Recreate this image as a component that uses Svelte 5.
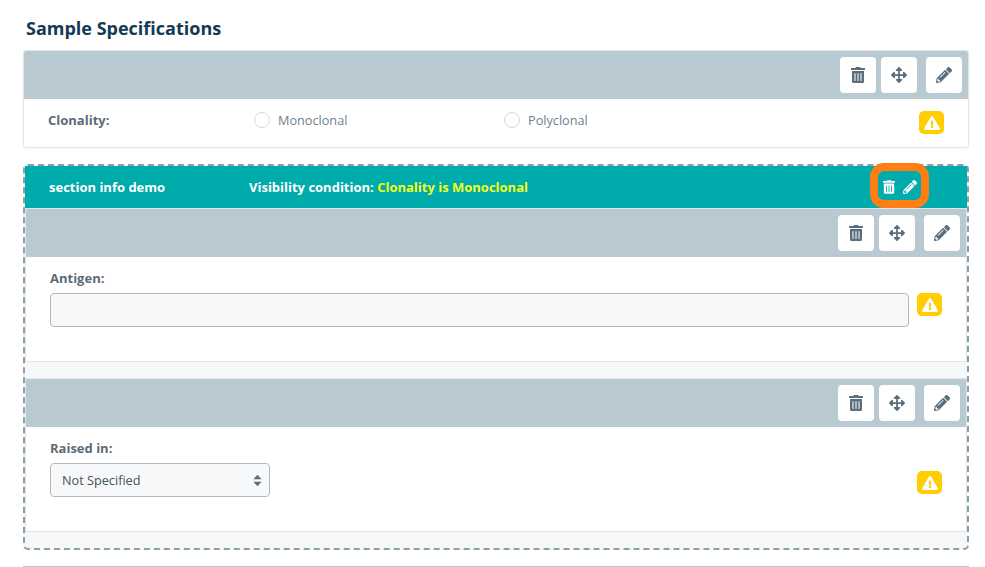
<script>
	const trash = 'M32 464a48 48 0 0 0 48 48h288a48 48 0 0 0 48-48V128H32zm272-256a16 16 0 0 1 32 0v224a16 16 0 0 1-32 0zm-96 0a16 16 0 0 1 32 0v224a16 16 0 0 1-32 0zm-96 0a16 16 0 0 1 32 0v224a16 16 0 0 1-32 0zM432 32H312l-9.4-18.7A24 24 0 0 0 281.1 0H166.8a23.72 23.72 0 0 0-21.4 13.3L136 32H16A16 16 0 0 0 0 48v32a16 16 0 0 0 16 16h416a16 16 0 0 0 16-16V48a16 16 0 0 0-16-16z';
	const arrows = 'M352.201 425.775l-79.196 79.196c-9.373 9.373-24.568 9.373-33.941 0l-79.196-79.196c-15.119-15.119-4.411-40.971 16.971-40.97h51.162L228 284H127.196v51.162c0 21.382-25.851 32.09-40.971 16.971L7.029 272.937c-9.373-9.373-9.373-24.569 0-33.941L86.225 159.8c15.119-15.119 40.971-4.411 40.971 16.971V228H228V127.196h-51.23c-21.382 0-32.09-25.851-16.971-40.971l79.196-79.196c9.373-9.373 24.568-9.373 33.941 0l79.196 79.196c15.119 15.119 4.411 40.971-16.971 40.971h-51.162V228h100.804v-51.162c0-21.382 25.851-32.09 40.97-16.971l79.196 79.196c9.373 9.373 9.373 24.569 0 33.941L425.773 352.2c-15.119 15.119-40.971 4.411-40.97-16.971V284H284v100.804h51.23c21.382 0 32.09 25.851 16.971 40.971z';
	const pencil = 'M497.9 142.1l-46.1 46.1c-4.7 4.7-12.3 4.7-17 0l-111-111c-4.7-4.7-4.7-12.3 0-17l46.1-46.1c18.7-18.7 49.1-18.7 67.9 0l60.1 60.1c18.8 18.7 18.8 49.1 0 67.9zM284.2 99.8L21.6 362.4.4 483.9c-2.9 16.4 11.4 30.6 27.8 27.8l121.5-21.3 262.6-262.6c4.7-4.7 4.7-12.3 0-17l-111-111c-4.8-4.7-12.4-4.7-17.1 0zM124.1 339.9c-5.5-5.5-5.5-14.3 0-19.8l154-154c5.5-5.5 14.3-5.5 19.8 0s5.5 14.3 0 19.8l-154 154c-5.5 5.5-14.3 5.5-19.8 0zM88 424h48v36.3l-64.5 11.3-31.1-31.1L51.7 376H88v48z';
	const warn = 'M569.517 440.013C587.975 472.007 564.806 512 527.94 512H48.054c-36.937 0-59.999-40.055-41.577-71.987L246.423 24.035c18.467-32.009 64.72-31.951 83.154 0l239.94 416.001zM288 354c-25.405 0-46 20.595-46 46s20.595 46 46 46 46-20.595 46-46-20.595-46-46-46zm-43.673-165.346l7.418 136c.347 6.364 5.609 11.346 11.982 11.346h48.546c6.373 0 11.635-4.982 11.982-11.346l7.418-136c.375-6.874-5.098-12.654-11.982-12.654h-63.383c-6.884 0-12.356 5.78-11.981 12.654z';
</script>

{#snippet toolbar()}
	<div class="toolbar">
		<button class="tool"><svg class="ico-trash" viewBox="0 0 448 512"><path d={trash} /></svg></button>
		<button class="tool"><svg class="ico-move" viewBox="0 0 512 512"><path d={arrows} /></svg></button>
		<button class="tool move-gap"><svg class="ico-pencil" viewBox="0 0 512 512"><path d={pencil} /></svg></button>
	</div>
{/snippet}

{#snippet badge()}
	<span class="badge"><svg viewBox="0 0 576 512"><path d={warn} /></svg></span>
{/snippet}

<div class="page">
	<h2>Sample Specifications</h2>

	<div class="card">
		{@render toolbar()}
		<div class="radio-row">
			<span class="field-label">Clonality:</span>
			<label class="radio"><input type="radio" name="clonality" />Monoclonal</label>
			<label class="radio"><input type="radio" name="clonality" />Polyclonal</label>
			{@render badge()}
		</div>
	</div>

	<section class="group">
		<div class="group-head">
			<span class="group-name">section info demo</span>
			<span class="group-cond">Visibility condition: <em>Clonality is Monoclonal</em></span>
			<div class="group-actions">
				<svg class="act-trash" viewBox="0 0 448 512"><path d={trash} /></svg>
				<svg class="act-pencil" viewBox="0 0 512 512"><path d={pencil} /></svg>
			</div>
		</div>

		<div class="card inner">
			{@render toolbar()}
			<div class="field">
				<span class="field-label">Antigen:</span>
				<div class="field-line">
					<input class="text-input" type="text" />
					{@render badge()}
				</div>
			</div>
		</div>

		<div class="card inner">
			{@render toolbar()}
			<div class="field">
				<span class="field-label">Raised in:</span>
				<div class="field-line select-line">
					<div class="select-wrap">
						<select>
							<option>Not Specified</option>
						</select>
						<svg class="caret" viewBox="0 0 10 14"><path d="M5 0.5 9.5 5.5H0.5zM5 13.5 0.5 8.5H9.5z" /></svg>
					</div>
					<div class="badge-push">{@render badge()}</div>
				</div>
			</div>
		</div>
	</section>

	<div class="card next"></div>
</div>

<style>
	:global(body) {
		background: #fff;
		overflow: hidden;
	}

	.page {
		height: 567px;
		overflow: hidden;
		box-sizing: border-box;
		padding: 0 16px 0 23px;
		font-family: "Open Sans", "Liberation Sans", sans-serif;
		font-size: 13px;
		color: #5c6b78;
	}

	h2 {
		margin: 0;
		height: 50px;
		padding: 16px 0 0 3px;
		box-sizing: border-box;
		font-size: 18px;
		line-height: 24px;
		font-weight: 700;
		color: #123a55;
	}

	.card {
		background: #fff;
		border: 1px solid #e2e5e8;
		border-radius: 3px;
		box-sizing: border-box;
		overflow: hidden;
		box-shadow: 0 1px 3px rgba(0, 0, 0, 0.04);
	}

	.toolbar {
		display: flex;
		justify-content: flex-end;
		gap: 5px;
		height: 48px;
		padding: 6px 6px 0 0;
		box-sizing: border-box;
		background: #b9c9d2;
	}

	.tool {
		width: 36px;
		height: 36px;
		padding: 0;
		border: 0;
		border-radius: 4px;
		background: #fff;
		display: flex;
		align-items: center;
		justify-content: center;
	}

	.move-gap {
		margin-left: 4px;
	}

	.tool svg {
		fill: #5a6e7b;
		display: block;
	}

	.ico-trash {
		width: 14px;
		height: 16px;
	}

	.ico-move {
		width: 16px;
		height: 16px;
	}

	.ico-pencil {
		width: 16px;
		height: 16px;
	}

	.radio-row {
		display: flex;
		align-items: center;
		height: 48px;
		padding: 0 24px;
	}

	.radio-row .field-label {
		width: 206px;
		padding-bottom: 7px;
	}

	.radio {
		width: 250px;
		padding-bottom: 7px;
		display: flex;
		align-items: center;
		gap: 8px;
		font-size: 12.7px;
		color: #6f7f8d;
	}

	.radio input {
		appearance: none;
		width: 16px;
		height: 16px;
		margin: 0;
		border: 1px solid #d5d9dd;
		border-radius: 50%;
		background: #fff;
	}

	.radio-row .badge {
		margin-left: auto;
		margin-bottom: 1px;
	}

	.field-label {
		font-weight: 700;
		color: #5c6b78;
	}

	.badge {
		flex: none;
		width: 25px;
		height: 23px;
		border-radius: 5px;
		background: #ffcd00;
		display: flex;
		align-items: center;
		justify-content: center;
	}

	.badge svg {
		width: 16px;
		height: 14px;
		fill: #fff;
		display: block;
	}

	.group {
		position: relative;
		margin-top: 16px;
		border: 2px dashed #8a9ea8;
		border-radius: 5px;
		background: #f6f7f9;
		height: 386px;
		box-sizing: border-box;
	}

	.group-head {
		position: relative;
		display: flex;
		align-items: center;
		height: 42px;
		padding-left: 24px;
		background: #00abab;
		color: #fff;
		font-weight: 700;
	}

	.group-name {
		width: 200px;
	}

	.group-cond em {
		font-style: normal;
		color: #f2ff20;
	}

	.group-actions {
		position: absolute;
		top: -3px;
		right: 38px;
		width: 59px;
		height: 45px;
		padding-top: 3px;
		box-sizing: border-box;
		border: 8px solid #ff7f14;
		border-radius: 14px;
		display: flex;
		align-items: center;
		justify-content: center;
		gap: 8px;
	}

	.group-actions svg {
		fill: #fff;
	}

	.act-trash {
		width: 12px;
		height: 14px;
	}

	.act-pencil {
		width: 14px;
		height: 14px;
	}

	.inner {
		height: 154px;
		margin-bottom: 16px;
		border-radius: 0;
		box-shadow: none;
	}

	.field {
		padding: 12px 24px 0 24px;
		display: flex;
		flex-direction: column;
		gap: 6px;
	}

	.field-line {
		display: flex;
		align-items: flex-start;
		gap: 8px;
	}

	.text-input {
		flex: 1;
		height: 34px;
		box-sizing: border-box;
		border: 1px solid #b4b8bc;
		border-radius: 4px;
		background: #f7f8fa;
	}

	.select-wrap {
		position: relative;
		width: 220px;
	}

	select {
		appearance: none;
		width: 100%;
		height: 34px;
		padding: 0 11px;
		box-sizing: border-box;
		border: 1px solid #b4b8bc;
		border-radius: 4px;
		background: #f7f8fa;
		color: #495057;
		font: inherit;
		font-size: 12.7px;
	}

	.caret {
		position: absolute;
		right: 8px;
		top: 11px;
		width: 9px;
		height: 13px;
		fill: #5a6e7b;
		pointer-events: none;
	}

	.select-line {
		justify-content: space-between;
	}

	.badge-push {
		padding-top: 8px;
	}

	.next {
		margin-top: 16px;
		height: 40px;
		border: 0;
		border-top: 1px solid #b9c9d2;
		border-radius: 0;
		box-shadow: none;
	}
</style>
